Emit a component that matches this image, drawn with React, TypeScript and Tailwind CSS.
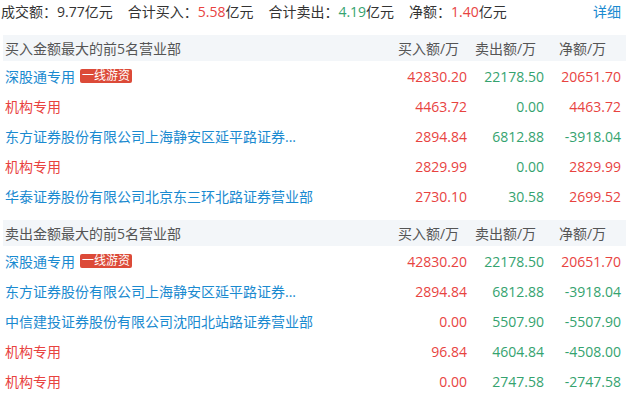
import React from "react";

const RED = "text-[#e8433f]";
const GREEN = "text-[#35a36f]";
const BLUE = "text-[#1a8ad0]";

type Row = {
  name: string;
  kind: "blue" | "red";
  tag?: string;
  buy: string;
  sell: string;
  net: string;
};

const buyRows: Row[] = [
  { name: "深股通专用", kind: "blue", tag: "一线游资", buy: "42830.20", sell: "22178.50", net: "20651.70" },
  { name: "机构专用", kind: "red", buy: "4463.72", sell: "0.00", net: "4463.72" },
  { name: "东方证券股份有限公司上海静安区延平路证券...", kind: "blue", buy: "2894.84", sell: "6812.88", net: "-3918.04" },
  { name: "机构专用", kind: "red", buy: "2829.99", sell: "0.00", net: "2829.99" },
  { name: "华泰证券股份有限公司北京东三环北路证券营业部", kind: "blue", buy: "2730.10", sell: "30.58", net: "2699.52" },
];

const sellRows: Row[] = [
  { name: "深股通专用", kind: "blue", tag: "一线游资", buy: "42830.20", sell: "22178.50", net: "20651.70" },
  { name: "东方证券股份有限公司上海静安区延平路证券...", kind: "blue", buy: "2894.84", sell: "6812.88", net: "-3918.04" },
  { name: "中信建投证券股份有限公司沈阳北站路证券营业部", kind: "blue", buy: "0.00", sell: "5507.90", net: "-5507.90" },
  { name: "机构专用", kind: "red", buy: "96.84", sell: "4604.84", net: "-4508.00" },
  { name: "机构专用", kind: "red", buy: "0.00", sell: "2747.58", net: "-2747.58" },
];

function Section({ title, rows }: { title: string; rows: Row[] }) {
  return (
    <div className="pl-[3px]">
      <div className="flex h-[26px] items-center bg-[#f3f6f9] text-[#555]">
        <div className="flex-1 pl-[2px]">{title}</div>
        <div className="w-[77px] text-center">买入额/万</div>
        <div className="w-[77px] text-center">卖出额/万</div>
        <div className="w-[77px] text-center">净额/万</div>
        <div className="w-[5px]" />
      </div>
      {rows.map((r, i) => (
        <div key={i} className="flex h-[30px] items-center">
          <div className="flex flex-1 items-center pl-[2px] whitespace-nowrap">
            <span className={r.kind === "blue" ? BLUE : RED}>{r.name}</span>
            {r.tag && (
              <span className="ml-[5px] rounded-[2px] bg-[#dc4a38] px-[2px] text-[12px] leading-[14px] text-white">
                {r.tag}
              </span>
            )}
          </div>
          <div className={`w-[77px] text-right ${RED}`}>{r.buy}</div>
          <div className={`w-[77px] text-right ${GREEN}`}>{r.sell}</div>
          <div className={`w-[77px] text-right ${r.net.startsWith("-") ? GREEN : RED}`}>{r.net}</div>
          <div className="w-[5px]" />
        </div>
      ))}
    </div>
  );
}

export default function App() {
  return (
    <div
      className="w-[626px] h-[395px] overflow-hidden bg-white text-[14px] text-[#333]"
      style={{ fontFamily: '"Open Sans", "Noto Sans CJK SC", sans-serif' }}
    >
      <div className="flex h-[22px] items-center pl-[1px] pr-[5px]">
        <span>成交额：9.77亿元</span>
        <span className="ml-[15px]">
          合计买入：<span className={RED}>5.58</span>亿元
        </span>
        <span className="ml-[15px]">
          合计卖出：<span className={GREEN}>4.19</span>亿元
        </span>
        <span className="ml-[15px]">
          净额：<span className={RED}>1.40</span>亿元
        </span>
        <span className={`ml-auto ${BLUE}`}>详细</span>
      </div>
      <div className="mt-[13px]">
        <Section title="买入金额最大的前5名营业部" rows={buyRows} />
      </div>
      <div className="mt-[9px]">
        <Section title="卖出金额最大的前5名营业部" rows={sellRows} />
      </div>
    </div>
  );
}
